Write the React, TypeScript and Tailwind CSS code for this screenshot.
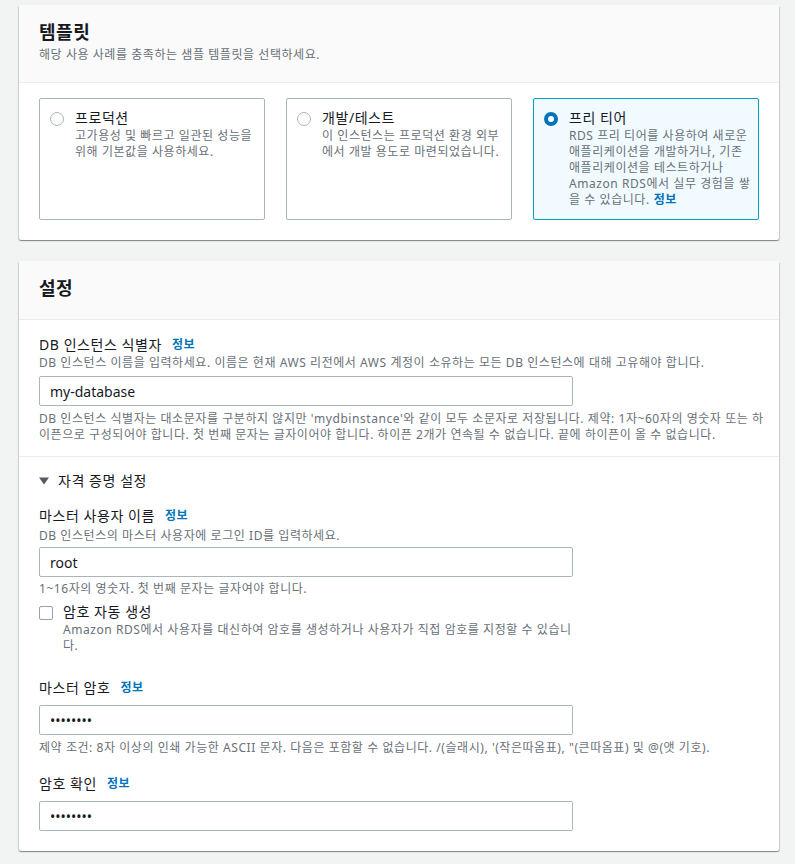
import React from 'react';

const Info = () => (
    <span className="ml-[10px] text-[12px] font-bold text-[#0073bb]">정보</span>
);

const Label: React.FC<{ text: string }> = ({ text }) => (
    <div className="flex items-center text-[14px] leading-5 text-[#16191f]">
        <span>{text}</span>
        <Info />
    </div>
);

const Hint: React.FC<{ children: React.ReactNode; className?: string }> = ({ children, className = '' }) => (
    <div className={`text-[12px] leading-4 text-[#687078] ${className}`}>{children}</div>
);

const Input: React.FC<{ value: string; password?: boolean; className?: string }> = ({ value, password, className = '' }) => (
    <div className={`flex h-[30px] w-[534px] items-center rounded-[2px] border border-[#aab7b8] bg-white px-[10px] tracking-normal ${className}`}>
        {password ? (
            <span className="text-[14px] text-[#16191f]">••••••••</span>
        ) : (
            <span className="text-[14px] text-[#16191f]">{value}</span>
        )}
    </div>
);

type Tile = { title: string; lines: string[]; selected?: boolean; info?: boolean };

const tiles: Tile[] = [
    { title: '프로덕션', lines: ['고가용성 및 빠르고 일관된 성능을', '위해 기본값을 사용하세요.'] },
    { title: '개발/테스트', lines: ['이 인스턴스는 프로덕션 환경 외부', '에서 개발 용도로 마련되었습니다.'] },
    {
        title: '프리 티어',
        lines: [
            'RDS 프리 티어를 사용하여 새로운',
            '애플리케이션을 개발하거나, 기존',
            '애플리케이션을 테스트하거나',
            'Amazon RDS에서 실무 경험을 쌓',
            '을 수 있습니다.',
        ],
        selected: true,
        info: true,
    },
];

const cardShadow =
    'shadow-[0_1px_1px_0_rgba(0,28,36,0.3),1px_1px_1px_0_rgba(0,28,36,0.15),-1px_1px_1px_0_rgba(0,28,36,0.15)]';

export default function App() {
    return (
        <div className="min-h-[864px] bg-[#f2f3f3] px-[19px] pt-[5px] pb-6 font-['Noto_Sans','Noto_Sans_CJK_KR',sans-serif] tracking-[0.035em] text-[#16191f]">
            {/* Template card */}
            <section className={`w-[760px] rounded-[2px] bg-white ${cardShadow}`}>
                <div className="border-b border-[#eaeded] bg-[#fafafa] px-5 pt-4 pb-[19px]">
                    <h2 className="text-[18px] font-bold leading-[22px]">템플릿</h2>
                    <p className="mt-[4px] text-[12px] leading-4 text-[#687078]">해당 사용 사례를 충족하는 샘플 템플릿을 선택하세요.</p>
                </div>
                <div className="grid grid-cols-3 gap-[21px] px-5 pt-[15px] pb-5">
                    {tiles.map((t) => (
                        <div
                            key={t.title}
                            className={`flex h-[122px] gap-[11px] rounded-[2px] border pl-[10px] pt-[9px] ${
                                t.selected ? 'border-[#00a1c9] bg-[#f1faff]' : 'border-[#aab7b8] bg-white'
                            }`}
                        >
                            <div className="pt-[4px]">
                                {t.selected ? (
                                    <div className="h-[14px] w-[14px] rounded-full border-[4.5px] border-[#0073bb] bg-white" />
                                ) : (
                                    <div className="h-[14px] w-[14px] rounded-full border-[1.5px] border-[#aab7b8] bg-white" />
                                )}
                            </div>
                            <div>
                                <div className="text-[14px] leading-5">{t.title}</div>
                                <div className="text-[12px] leading-4 text-[#687078]">
                                    {t.lines.map((l, i) => (
                                        <div key={i} className="whitespace-nowrap">
                                            {l}
                                            {t.info && i === t.lines.length - 1 && (
                                                <span className="ml-1 font-bold text-[#0073bb]">정보</span>
                                            )}
                                        </div>
                                    ))}
                                </div>
                            </div>
                        </div>
                    ))}
                </div>
            </section>

            {/* Settings card */}
            <section className={`mt-[21px] w-[760px] rounded-[2px] bg-white ${cardShadow}`}>
                <div className="border-b border-[#eaeded] bg-[#fafafa] px-5 pt-4 pb-5">
                    <h2 className="text-[18px] font-bold leading-[22px]">설정</h2>
                </div>

                <div className="border-b border-[#eaeded] px-5 pt-[15px] pb-[13px]">
                    <Label text="DB 인스턴스 식별자" />
                    <Hint>DB 인스턴스 이름을 입력하세요. 이름은 현재 AWS 리전에서 AWS 계정이 소유하는 모든 DB 인스턴스에 대해 고유해야 합니다.</Hint>
                    <Input value="my-database" className="mt-[5px]" />
                    <Hint className="mt-[5px] whitespace-nowrap">
                        <div>DB 인스턴스 식별자는 대소문자를 구분하지 않지만 'mydbinstance'와 같이 모두 소문자로 저장됩니다. 제약: 1자~60자의 영숫자 또는 하</div>
                        <div>이픈으로 구성되어야 합니다. 첫 번째 문자는 글자이어야 합니다. 하이픈 2개가 연속될 수 없습니다. 끝에 하이픈이 올 수 없습니다.</div>
                    </Hint>
                </div>

                <div className="px-5 pt-[14px] pb-5">
                    <div className="flex items-center gap-[9px] text-[14px] leading-5">
                        <svg width="10" height="8" viewBox="0 0 10 8">
                            <polygon points="0,0.5 10,0.5 5,7.5" fill="#545b64" />
                        </svg>
                        <span>자격 증명 설정</span>
                    </div>

                    <div className="mt-[15px]">
                        <Label text="마스터 사용자 이름" />
                        <Hint className="mt-[2px]">DB 인스턴스의 마스터 사용자에 로그인 ID를 입력하세요.</Hint>
                        <Input value="root" className="mt-[3px]" />
                        <Hint className="mt-[4px]">1~16자의 영숫자. 첫 번째 문자는 글자여야 합니다.</Hint>
                    </div>

                    <div className="mt-[5px] flex w-[534px] gap-[10px]">
                        <div className="pt-[4px]">
                            <div className="h-[14px] w-[14px] rounded-[2px] border border-[#95a5a6] bg-white" />
                        </div>
                        <div>
                            <div className="text-[14px] leading-5">암호 자동 생성</div>
                            <Hint className="whitespace-nowrap">
                                <div>Amazon RDS에서 사용자를 대신하여 암호를 생성하거나 사용자가 직접 암호를 지정할 수 있습니</div>
                                <div>다.</div>
                            </Hint>
                        </div>
                    </div>

                    <div className="mt-[24px]">
                        <Label text="마스터 암호" />
                        <Input value="" password className="mt-[7px]" />
                        <Hint className="mt-[5px]">제약 조건: 8자 이상의 인쇄 가능한 ASCII 문자. 다음은 포함할 수 없습니다. /(슬래시), '(작은따옴표), "(큰따옴표) 및 @(앳 기호).</Hint>
                    </div>

                    <div className="mt-[18px]">
                        <Label text="암호 확인" />
                        <Input value="" password className="mt-[7px]" />
                    </div>
                </div>
            </section>
        </div>
    );
}
